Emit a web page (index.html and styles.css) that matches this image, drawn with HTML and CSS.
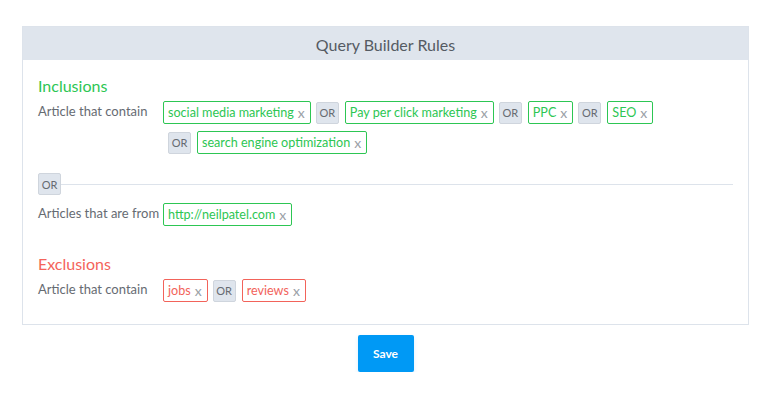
FILE: index.html
```html
<!DOCTYPE html>
<html lang="en">
<head>
    <meta charset="UTF-8">
    <meta name="viewport" content="width=device-width, initial-scale=1.0">
    <title>Query Builder Rules</title>
    <link rel="stylesheet" href="styles.css">
</head>
<body>
    <main class="main">
        <div class="panel">
            <div class="panel-header">Query Builder Rules</div>
            <div class="panel-body">
                <h2 class="section-title include">Inclusions</h2>
                <div class="rule">
                    <label class="rule-label">Article that contain</label>
                    <div class="chips">
                        <span class="chip include">social media marketing <span class="remove">x</span></span>
                        <span class="group">
                            <span class="or">OR</span>
                            <span class="chip include">Pay per click marketing <span class="remove">x</span></span>
                        </span>
                        <span class="group">
                            <span class="or">OR</span>
                            <span class="chip include">PPC <span class="remove">x</span></span>
                        </span>
                        <span class="group">
                            <span class="or">OR</span>
                            <span class="chip include">SEO <span class="remove">x</span></span>
                        </span>
                        <span class="group">
                            <span class="or">OR</span>
                            <span class="chip include">search engine optimization <span class="remove">x</span></span>
                        </span>
                    </div>
                </div>

                <div class="divider">
                    <span class="or">OR</span>
                    <span class="divider-line"></span>
                </div>

                <div class="rule">
                    <label class="rule-label">Articles that are from</label>
                    <div class="chips">
                        <span class="chip include">http://neilpatel.com <span class="remove">x</span></span>
                    </div>
                </div>

                <h2 class="section-title exclude">Exclusions</h2>
                <div class="rule">
                    <label class="rule-label">Article that contain</label>
                    <div class="chips">
                        <span class="chip exclude">jobs <span class="remove">x</span></span>
                        <span class="group">
                            <span class="or">OR</span>
                            <span class="chip exclude">reviews <span class="remove">x</span></span>
                        </span>
                    </div>
                </div>
            </div>
        </div>
        <div class="actions">
            <button class="btn-save" type="button">Save</button>
        </div>
    </main>
</body>
</html>
```

FILE: styles.css
```css
body {
    font-family: 'Lato', 'Open Sans', sans-serif;
    background-color: #fff;
    color: #666;
    margin: 0;
}
.main {
    padding: 26px 19px 0 22px;
}
.panel {
    border: 1px solid #dde3eb;
}
.panel-header {
    background-color: #dfe5ed;
    color: #555b63;
    font-size: 16px;
    text-align: center;
    height: 33px;
    line-height: 35px;
}
.panel-body {
    padding: 16px 15px 22px 15px;
}
.section-title {
    font-size: 16px;
    font-weight: normal;
    margin: 0 0 5px 0;
    line-height: 20px;
}
.section-title.include {
    color: #2dc653;
}
.section-title.exclude {
    color: #f4645b;
    margin-top: 28px;
}
.rule {
    display: flex;
    align-items: flex-start;
}
.rule-label {
    width: 125px;
    flex-shrink: 0;
    font-size: 13px;
    line-height: 20px;
    color: #666b72;
}
.chips {
    display: flex;
    flex-wrap: wrap;
    align-items: center;
    row-gap: 7px;
    flex: 1;
}
.chips > * {
    margin-left: 5px;
}
.chips > :first-child {
    margin-left: 0;
}
.group {
    display: inline-flex;
    align-items: center;
    gap: 6px;
}
.chip {
    box-sizing: border-box;
    display: inline-flex;
    align-items: center;
    height: 23px;
    padding: 0 5px 0 4px;
    border: 1px solid;
    border-radius: 2px;
    font-size: 12.6px;
    white-space: nowrap;
}
.chip.include {
    border-color: #2dc653;
    color: #2dc653;
}
.chip.exclude {
    border-color: #f2635a;
    color: #f2635a;
}
.remove {
    color: #9aa0a6;
    margin-left: 4px;
    font-size: 14px;
}
.or {
    box-sizing: border-box;
    display: inline-flex;
    align-items: center;
    justify-content: center;
    height: 22px;
    width: 23px;
    background-color: #dfe5ed;
    border: 1px solid #cfd5dd;
    border-radius: 2px;
    font-size: 11px;
    color: #666b72;
}
.divider {
    display: flex;
    align-items: center;
    margin: 19px 0 8px 0;
}
.divider-line {
    flex: 1;
    height: 1px;
    background-color: #dde3eb;
}
.actions {
    display: flex;
    justify-content: center;
    padding-top: 10px;
}
.btn-save {
    background-color: #0099f5;
    color: #fff;
    border: none;
    border-radius: 2px;
    font-family: 'Lato', 'Open Sans', sans-serif;
    font-weight: bold;
    font-size: 12px;
    width: 56px;
    height: 37px;
    box-shadow: 0 2px 4px rgba(0, 153, 245, 0.15);
}
```
